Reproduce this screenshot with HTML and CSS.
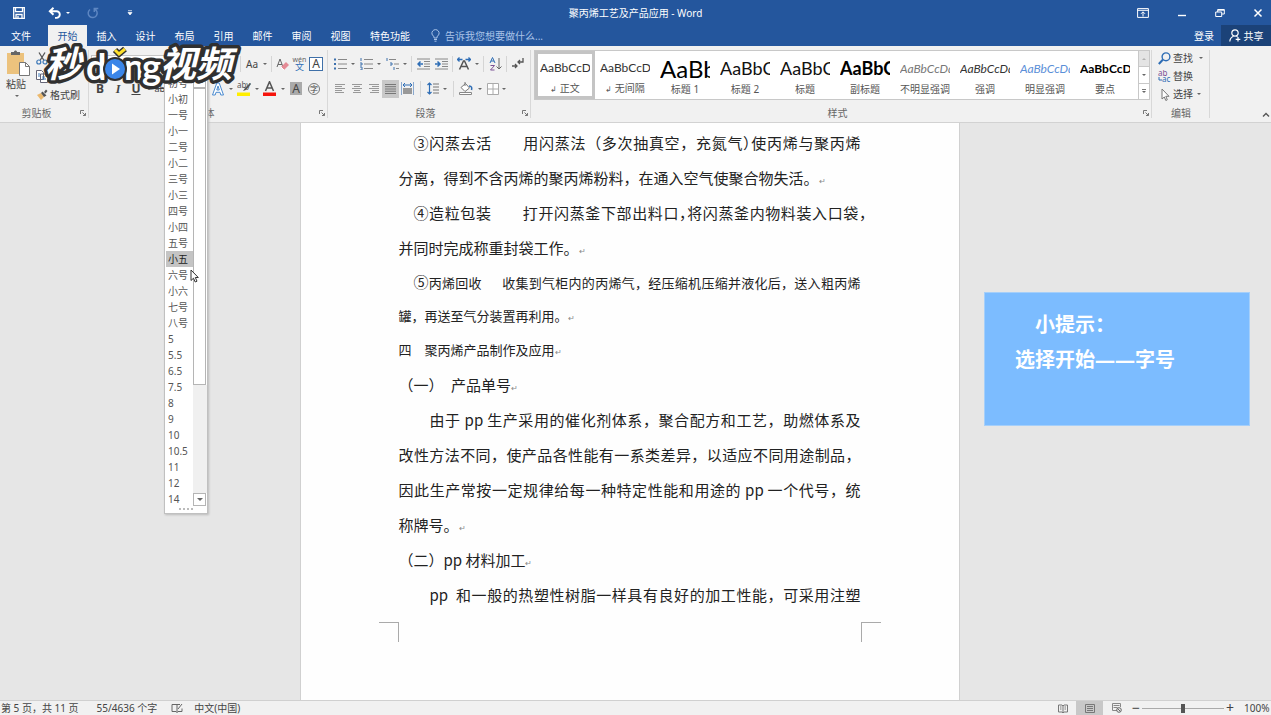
FILE: index.html
```html
<!DOCTYPE html>
<html lang="zh-CN">
<head>
<meta charset="utf-8">
<title>聚丙烯工艺及产品应用 - Word</title>
<link rel="stylesheet" href="styles.css">
</head>
<body>
<div class="app">
<header class="titlebar">
  <div class="quick">
    <button aria-label="保存"><svg width="12" height="12" viewBox="0 0 12 12"><path d="M.7.7h10.6v10.6H.7zM2.5.7v4h7v-4M3 11.3V7.5h6v3.8M5 9v2" fill="none" stroke="#fff" stroke-width="1.3"/></svg></button>
    <button class="undo" aria-label="撤消"><svg width="14" height="12" viewBox="0 0 14 12"><path d="M5.5.8 1.8 4.3l3.7 3.5M2 4.3h6.5a3.3 3.3 0 0 1 0 6.6H7" fill="none" stroke="#fff" stroke-width="1.9"/></svg><i class="caret light"></i></button>
    <button class="redo" aria-label="重复"><svg width="12" height="12" viewBox="0 0 12 12"><path d="M7.5 2A4.5 4.5 0 1 1 3 2.5M7.3 5V1.5h4" fill="none" stroke="#5d86c2" stroke-width="1.5"/></svg></button>
    <button class="more" aria-label="自定义快速访问工具栏"><svg width="6" height="6" viewBox="0 0 6 6"><path d="M1 .7h4M1 2.5h4L3 5z" fill="#fff" stroke="#fff" stroke-width=".7"/></svg></button>
  </div>
  <h1>聚丙烯工艺及产品应用 - Word</h1>
  <div class="window">
    <button aria-label="功能区显示选项"><svg width="12" height="10" viewBox="0 0 12 10"><path d="M.6.6h10.8v8.8H.6zM.6 2.3h10.8M6 8.5V4M4 5.8l2-2 2 2" fill="none" stroke="#fff"/></svg></button>
    <button aria-label="最小化"><svg width="10" height="10" viewBox="0 0 10 10"><path d="M1 7.5h8" stroke="#fff" stroke-width="1.4"/></svg></button>
    <button aria-label="还原"><svg width="10" height="10" viewBox="0 0 10 10"><path d="M.7 4h6v4.5h-6zM2.7 4V1.5h6.6V6H6.7M2.7 2.2h6.6" fill="none" stroke="#fff"/></svg></button>
    <button aria-label="关闭"><svg width="10" height="10" viewBox="0 0 10 10"><path d="m1.5 1.5 7 7m0-7-7 7" stroke="#fff" stroke-width="1.5"/></svg></button>
  </div>
</header>
<nav class="tabs">
  <button>文件</button><button class="active">开始</button><button>插入</button><button>设计</button><button>布局</button><button>引用</button><button>邮件</button><button>审阅</button><button>视图</button><button class="wide">特色功能</button>
  <button class="tell"><svg width="9" height="13" viewBox="0 0 9 13"><path d="M3 9V7.5a3.6 3.6 0 1 1 3 0V9zM3 10.5h3M3.5 12.2h2" fill="none" stroke="#a9c3e8"/></svg>告诉我您想要做什么...</button>
  <button class="login">登录</button>
  <button class="share"><svg width="12" height="13" viewBox="0 0 12 13"><circle cx="6" cy="4" r="3.2" fill="none" stroke="#fff" stroke-width="1.2"/><path d="M.8 12.5C1 9.5 2.500 8 4.500 7.200M7.500 7l1 .8M9 8v4.500M6.700 10.300h4.600" fill="none" stroke="#fff" stroke-width="1.2"/></svg>共享</button>
</nav>
<section class="ribbon">
  <div class="group clipboard">
    <div class="body clip">
      <button class="paste"><svg width="25" height="27" viewBox="0 0 25 27"><path d="M1 3h17v21H1z" fill="#ecc27d"/><path d="M5 5V2h3c0-2 3-2 3 0h3v3z" fill="#666"/><path d="M13.500 12.500h6l4 4v9h-10z" fill="#fff" stroke="#777"/><path d="M19.500 12.500v4h4" fill="none" stroke="#777"/></svg><span>粘贴</span><i class="caret"></i></button>
      <div class="cliplist">
        <button aria-label="剪切"><svg width="12" height="13" viewBox="0 0 12 13"><path d="m3 .5 5 8M9 .5l-5 8" stroke="#555" stroke-width="1.300"/><circle cx="2.800" cy="10" r="2" fill="none" stroke="#3c78b8" stroke-width="1.200"/><circle cx="9" cy="10" r="2" fill="none" stroke="#3c78b8" stroke-width="1.200"/></svg></button>
        <button aria-label="复制"><svg width="12" height="13" viewBox="0 0 12 13"><path d="M.5.500h5l2 2v7h-7zM4.500 4h5l2 2v6.500h-7z" fill="#fff" stroke="#667"/><path d="M2 4h2M2 6h2M6 7h3M6 9h4" stroke="#3c78b8"/></svg></button>
        <button><svg width="12" height="12" viewBox="0 0 12 12"><path d="m1 6 4-2 3 4-3 3z" fill="#ecb96d"/><path d="m5 4 1.500-1.500 4 4L8 8zM8 3l2-2.500 1.500 1.500-2 2.500z" fill="#555"/></svg>格式刷</button>
      </div>
    </div>
    <footer><span>剪贴板</span><button class="launch" aria-label="剪贴板选项"><svg width="6" height="6" viewBox="0 0 6 6"><path d="M.5 4V.500H4M2.500 2.500l3 3M5.500 3v2.500H3" fill="none" stroke="#777"/></svg></button></footer>
  </div>
  <div class="group font">
    <div class="body rows">
      <div class="row">
        <select class="fontname" aria-label="字体"><option></option></select><select class="fontsize" aria-label="字号"><option></option></select>
        <i class="sep first"></i><button>Aa</button><i class="caret"></i><i class="sep"></i>
        <button aria-label="清除格式"><svg width="14" height="14" viewBox="0 0 14 14"><path d="m1 10 3-8 3 8M2 7.500h4" fill="none" stroke="#666"/><path d="m5 10 5-5 3 3-5 5z" fill="#e58b96"/><path d="m5 10 3 3" stroke="#fff"/></svg></button>
        <button class="ruby" aria-label="拼音指南"><small>wén</small><b>文</b></button>
        <button class="boxed">A</button>
      </div>
      <div class="row">
        <button class="strong">B</button><button class="strong ital">I</button><button class="strong under">U</button><i class="caret"></i><button class="strike">abc</button>
        <button class="effect" aria-label="文本效果"><svg width="14" height="14" viewBox="0 0 14 14"><path d="M1.500 13 5.800 1h2.400l4.300 12H9.800l-.8-2.700H5L4.200 13zM5.800 8h2.500L7 4z" fill="#fff" stroke="#4b8bd0"/></svg></button><i class="caret"></i>
        <button aria-label="突出显示"><svg width="14" height="15" viewBox="0 0 14 15"><path d="M0 11.500h13V15H0z" fill="#ffee00"/><text x="0" y="7" class="t8">aby</text><path d="M13 2 8 7l-2 3 3-1 5-6z" fill="#555"/></svg></button><i class="caret"></i>
        <button aria-label="字体颜色"><svg width="14" height="15" viewBox="0 0 14 15"><path d="M0 11.500h13V15H0z" fill="#f6140c"/><path d="m2.500 10 4-9.300L10.500 10M4 7h5" fill="none" stroke="#555" stroke-width="1.500"/></svg></button><i class="caret"></i>
        <button class="shade"><span>A</span></button>
        <button class="circ"><span>字</span></button>
      </div>
    </div>
    <footer><span>字体</span><button class="launch" aria-label="字体选项"><svg width="6" height="6" viewBox="0 0 6 6"><path d="M.5 4V.500H4M2.500 2.500l3 3M5.500 3v2.500H3" fill="none" stroke="#777"/></svg></button></footer>
  </div>
  <div class="group para">
    <div class="body rows">
      <div class="row">
        <button aria-label="项目符号"><svg width="13" height="12" viewBox="0 0 13 12"><path d="M0 1.500h2M0 6h2M0 10.500h2" stroke="#3c70ad" stroke-width="2"/><path d="M4 1.500h9M4 6h9M4 10.500h9" stroke="#888"/></svg></button><i class="caret"></i>
        <button aria-label="编号"><svg width="13" height="12" viewBox="0 0 13 12"><path d="M1 0v3M0 5h2v2H0M0 9h2v3H0" fill="none" stroke="#3c70ad"/><path d="M4 1.500h9M4 6h9M4 10.500h9" stroke="#888"/></svg></button><i class="caret"></i>
        <button aria-label="多级列表"><svg width="13" height="12" viewBox="0 0 13 12"><path d="M1 0v3M4 5h2v2H4M8 9v3" fill="none" stroke="#3c70ad"/><path d="M3 1.500h7M8 6h5M10 10.500h3" stroke="#888"/></svg></button><i class="caret"></i><i class="sep"></i>
        <button aria-label="减少缩进"><svg width="13" height="12" viewBox="0 0 13 12"><path d="M0 1h13M7 3.500h6M7 6h6M7 8.500h6M0 11h13" stroke="#888"/><path d="M6 6H1m2.500-2.500L1 6l2.500 2.500" fill="none" stroke="#2e6db5" stroke-width="1.500"/></svg></button>
        <button aria-label="增加缩进"><svg width="13" height="12" viewBox="0 0 13 12"><path d="M0 1h13M7 3.500h6M7 6h6M7 8.500h6M0 11h13" stroke="#888"/><path d="M0 6h5M2.500 3.500 5 6 2.500 8.500" fill="none" stroke="#2e6db5" stroke-width="1.500"/></svg></button><i class="sep"></i>
        <button aria-label="中文版式"><svg width="14" height="13" viewBox="0 0 14 13"><path d="M.500 2.500h5M8.500 2.500h5M2.500.500l-2 2 2 2M11.500.500l2 2-2 2" fill="none" stroke="#2e6db5" stroke-width="1.300"/><path d="M2.500 12.500 6.500 4h1l4 8.500M4 9.500h6" fill="none" stroke="#555" stroke-width="1.500"/></svg></button><i class="caret"></i><i class="sep"></i>
        <button aria-label="排序"><svg width="13" height="14" viewBox="0 0 13 14"><path d="M1 6 3.500.500 6 6M2 4h3" fill="none" stroke="#2e6db5"/><path d="M1.500 8.500h4l-4 4.500h4" fill="none" stroke="#7c5296"/><path d="M10 1v11M7.500 9.500 10 12l2.500-2.500" fill="none" stroke="#666"/></svg></button><i class="sep"></i>
        <button aria-label="显示编辑标记"><svg width="12" height="11" viewBox="0 0 12 11"><path d="M11 0v4H6M8 2 6 4l2 2M0 8h5M3 6l2 2-2 2" fill="none" stroke="#555" stroke-width="1.300"/></svg></button>
      </div>
      <div class="row tight">
        <button aria-label="左对齐"><svg width="10" height="9" viewBox="0 0 10 9"><path d="M0 .500h10M0 2.500h7M0 4.500h10M0 6.500h7M0 8.500h9" stroke="#999"/></svg></button>
        <button aria-label="居中"><svg width="10" height="9" viewBox="0 0 10 9"><path d="M0 .500h10M2 2.500h6M0 4.500h10M2 6.500h6M1 8.500h8" stroke="#999"/></svg></button>
        <button aria-label="右对齐"><svg width="10" height="9" viewBox="0 0 10 9"><path d="M0 .500h10M3 2.500h7M0 4.500h10M3 6.500h7M1 8.500h9" stroke="#999"/></svg></button>
        <button class="on" aria-label="两端对齐"><svg width="11" height="10" viewBox="0 0 11 10"><path d="M0 .500h11M0 2.700h11M0 5h11M0 7.200h11M0 9.500h11" stroke="#777"/></svg></button>
        <button aria-label="分散对齐"><svg width="13" height="13" viewBox="0 0 13 13"><path d="M2 6h9v6H2z" fill="#999"/><path d="M.5 0v13M12.500 0v13" stroke="#8aa9cf"/><path d="M2 3h9M4 1 2 3l2 2M9 1l2 2-2 2" fill="none" stroke="#2e6db5"/></svg></button><i class="sep big"></i>
        <button aria-label="行距"><svg width="12" height="13" viewBox="0 0 12 13"><path d="M2.500 1v11M.500 3l2-2 2 2M.500 10l2 2 2-2" fill="none" stroke="#2e6db5" stroke-width="1.200"/><path d="M6 2h6M6 5h6M6 8h6M6 11h6" stroke="#777"/></svg></button><i class="caret"></i><i class="sep big"></i>
        <button aria-label="底纹"><svg width="14" height="13" viewBox="0 0 14 13"><path d="m2 5.500 4.500-4 4 4.500L6 9.500zM6 4V0" fill="#fff" stroke="#777"/><path d="M10 4c3 0 3 2 2.500 4" fill="none" stroke="#2e6db5" stroke-width="1.500"/><path d="M.5 10.500h12v2H.500z" fill="#fff" stroke="#888"/></svg></button><i class="caret far"></i>
        <button class="border" aria-label="边框"><svg width="12" height="12" viewBox="0 0 12 12"><path d="M.5.500h11v11H.500zM6 .500v11M.500 6h11" fill="#fff" stroke="#aaa"/></svg></button><i class="caret"></i>
      </div>
    </div>
    <footer><span>段落</span><button class="launch" aria-label="段落选项"><svg width="6" height="6" viewBox="0 0 6 6"><path d="M.5 4V.500H4M2.500 2.500l3 3M5.500 3v2.500H3" fill="none" stroke="#777"/></svg></button></footer>
  </div>
  <div class="group styles">
    <div class="body gal">
      <div class="gallery">
        <button class="chosen"><span class="sample">AaBbCcDd</span><span class="name"><em>↲</em> 正文</span></button>
        <button><span class="sample">AaBbCcDd</span><span class="name"><em>↲</em> 无间隔</span></button>
        <button><span class="sample h1">AaBb</span><span class="name">标题 1</span></button>
        <button><span class="sample h2">AaBbC</span><span class="name">标题 2</span></button>
        <button><span class="sample h2">AaBbC</span><span class="name">标题</span></button>
        <button><span class="sample h2 bold">AaBbC</span><span class="name">副标题</span></button>
        <button><span class="sample it grey">AaBbCcDd</span><span class="name">不明显强调</span></button>
        <button><span class="sample it">AaBbCcDd</span><span class="name">强调</span></button>
        <button><span class="sample it blue">AaBbCcDd</span><span class="name">明显强调</span></button>
        <button><span class="sample bold">AaBbCcD</span><span class="name">要点</span></button>
      </div>
      <div class="galscroll"><button aria-label="上一行"><i class="caret up"></i></button><button aria-label="下一行"><i class="caret"></i></button><button class="all" aria-label="其他"><i class="caret"></i></button></div>
    </div>
    <footer><span>样式</span><button class="launch" aria-label="样式选项"><svg width="6" height="6" viewBox="0 0 6 6"><path d="M.5 4V.500H4M2.500 2.500l3 3M5.500 3v2.500H3" fill="none" stroke="#777"/></svg></button></footer>
  </div>
  <div class="group edit">
    <div class="body edits">
      <button><svg width="13" height="13" viewBox="0 0 13 13"><circle cx="8" cy="4.800" r="3.900" fill="none" stroke="#2e6db5" stroke-width="1.400"/><path d="M5 7.500.800 12" stroke="#2e6db5" stroke-width="2"/></svg>查找<i class="caret far"></i></button>
      <button><svg width="13" height="13" viewBox="0 0 13 13"><text x="0" y="6" class="t8 violet">ab</text><text x="4" y="12" class="t8 navy">ac</text><path d="M1 7v3h3" fill="none" stroke="#2e6db5"/></svg>替换</button>
      <button><svg width="13" height="13" viewBox="0 0 13 13"><path d="M4 1v10l2.300-2 1.500 3.500 1.500-.7L7.800 8.300H11z" fill="#fff" stroke="#777"/></svg>选择<i class="caret"></i></button>
    </div>
    <footer><span>编辑</span></footer>
  </div>
  <button class="collapse" aria-label="折叠功能区"><svg width="8" height="6" viewBox="0 0 8 6"><path d="m1 4.500 3-3 3 3" fill="none" stroke="#555" stroke-width="1.400"/></svg></button>
</section>
<main class="workspace">
  <article class="page">
    <div class="text">
      <p class="full in1">③闪蒸去活　　用闪蒸法（多次抽真空，充氮气<span class="half">）</span>使丙烯与聚丙烯</p>
      <p>分离，得到不含丙烯的聚丙烯粉料，在通入空气使聚合物失活。<i class="ret">↵</i></p>
      <p class="full in1 hang">④造粒包装　　打开闪蒸釜下部出料口<span class="half">，</span>将闪蒸釜内物料装入口袋<span class="half">，</span></p>
      <p>并同时完成称重封袋工作。<i class="ret">↵</i></p>
      <p class="full in1 small"><span class="num">⑤</span>丙烯回收<span class="gap"></span>收集到气柜内的丙烯气，经压缩机压缩并液化后，送入粗丙烯</p>
      <p class="small">罐，再送至气分装置再利用。<i class="ret">↵</i></p>
      <p class="small">四　聚丙烯产品制作及应用<i class="ret">↵</i></p>
      <p>（一）　产品单号<i class="ret">↵</i></p>
      <p class="full in2">由于 pp 生产采用的催化剂体系，聚合配方和工艺，助燃体系及</p>
      <p class="full">改性方法不同，使产品各性能有一系类差异，以适应不同用途制品，</p>
      <p class="full">因此生产常按一定规律给每一种特定性能和用途的 pp 一个代号，统</p>
      <p>称牌号。<i class="ret">↵</i></p>
      <p>（二）pp 材料加工<i class="ret">↵</i></p>
      <p class="full in2">pp&nbsp; 和一般的热塑性树脂一样具有良好的加工性能，可采用注塑</p>
    </div>
    <div class="marks"><i></i><i></i></div>
  </article>
  <aside class="tip"><p class="lead">小提示：</p><p>选择开始——字号</p></aside>
</main>
<footer class="status">
  <span>第 5 页，共 11 页</span><span class="words">55/4636 个字</span>
  <svg width="12" height="10" viewBox="0 0 12 10"><path d="M6 1.500v8M6 1.500H1v7h4l1 1 1-1h4v-3M6 1.500h3M7 6l4-5" fill="none" stroke="#666"/></svg>
  <span class="lang">中文(中国)</span>
  <div class="views">
    <button aria-label="阅读视图"><svg width="10" height="9" viewBox="0 0 10 9"><path d="M.5 1H4l1 1 1-1h3.500v7H6L5 9 4 8H.500zM5 2v6M2 3h1.500M2 5h1.500M6.500 3H8M6.500 5H8" fill="none" stroke="#777"/></svg></button>
    <button class="on" aria-label="页面视图"><svg width="10" height="9" viewBox="0 0 10 9"><path d="M.5.500h9v8h-9zM2 2.500h6M2 4.500h6M2 6.500h6" fill="none" stroke="#777"/></svg></button>
    <button aria-label="Web 版式视图"><svg width="10" height="10" viewBox="0 0 10 10"><path d="M5 7.500H.500v-7h8V4M1.500 2.500h6M1.500 4.500h4" fill="none" stroke="#888"/><circle cx="7" cy="7" r="2.300" fill="#eee" stroke="#666"/><path d="m5.500 5.500 3 3" stroke="#666"/></svg></button>
  </div>
  <button class="zoomb" aria-label="缩小">−</button><input type="range" aria-label="显示比例" min="0" max="100" value="50"><button class="zoomb" aria-label="放大">+</button><span class="pct">100%</span>
</footer>
<div class="dropdown">
  <ul role="listbox" aria-label="字号列表">
    <li role="option">初号</li><li role="option">小初</li><li role="option">一号</li><li role="option">小一</li><li role="option">二号</li><li role="option">小二</li><li role="option">三号</li><li role="option">小三</li><li role="option">四号</li><li role="option">小四</li><li role="option">五号</li><li role="option" aria-selected="true" class="sel">小五</li><li role="option">六号</li><li role="option">小六</li><li role="option">七号</li><li role="option">八号</li><li role="option">5</li><li role="option">5.5</li><li role="option">6.5</li><li role="option">7.5</li><li role="option">8</li><li role="option">9</li><li role="option">10</li><li role="option">10.5</li><li role="option">11</li><li role="option">12</li><li role="option">14</li>
  </ul>
  <div class="scroll"><button aria-label="向上滚动"><i class="caret up"></i></button><div class="thumb"></div><div class="track"></div><button aria-label="向下滚动"><i class="caret"></i></button></div>
  <div class="grip"><i></i><i></i><i></i><i></i></div>
</div>
<svg class="cursor" width="9" height="14" viewBox="0 0 9 14"><path d="M1 1v10.500l2.500-2.300L5.200 13l1.800-.8-1.700-3.700H8.300z" fill="#fff" stroke="#333"/></svg>
<svg class="brand" width="196" height="50" viewBox="0 0 196 50">
  <g class="brandtext">
    <text x="1" y="34" class="cjk">秒</text><text x="42" y="37" class="lat">d</text><text x="80" y="37" class="lat">n</text><text x="98" y="37" class="lat">g</text><text x="116" y="34" class="cjk">视频</text>
  </g>
  <circle cx="71" cy="26" r="12" fill="#303030"/><circle cx="71" cy="26" r="10" fill="#3b86e8"/><path d="M68 20.500v11l8-5.500z" fill="#fff"/><path d="m71 7 4 4 6-5" fill="none" stroke="#303030" stroke-width="6"/><path d="m71 7 4 4 6-5" fill="none" stroke="#ffe02b" stroke-width="3"/>
</svg>
</div>
</body>
</html>
```
FILE: styles.css
```css
* { box-sizing: border-box; }
body { margin: 0; font-family: "Noto Sans", "Noto Sans CJK SC", sans-serif; font-size: 10px; line-height: 14px; color: #444; }
button, select, input { font: inherit; color: inherit; background: none; border: 0; padding: 0; margin: 0; }
button { display: inline-flex; align-items: center; justify-content: center; white-space: nowrap; }
svg { flex: none; display: block; }
p, ul, h1 { margin: 0; padding: 0; }
.app { position: relative; display: flex; flex-direction: column; height: 100vh; overflow: hidden; background: #e6e6e6; }

.caret { flex: none; width: 8px; display: flex; justify-content: center; }
.caret::after { content: ""; border: 2px solid transparent; border-top-color: #666; border-bottom: 0; }
.caret.light::after { border-top-color: #fff; }
.caret.up::after { border: 2px solid transparent; border-bottom-color: #666; border-top: 0; }
.caret.far { width: 12px; }
.sep { flex: none; width: 5px; height: 16px; background: linear-gradient(#d5d5d5, #d5d5d5) center / 1px 100% no-repeat; }
.sep.big { width: 8px; }

.titlebar { flex: none; display: grid; grid-template-columns: 1fr auto 1fr; align-items: center; height: 25px; background: #24569d; color: #fff; }
.titlebar h1 { font-size: 10px; font-weight: 400; line-height: 14px; }
.quick { display: flex; align-items: center; padding-left: 13px; }
.undo { margin-left: 23px; gap: 2px; }
.redo { margin-left: 15px; }
.more { margin-left: 28px; }
.window { display: flex; justify-content: flex-end; gap: 28px; padding-right: 8px; }

.tabs { flex: none; display: flex; height: 21px; background: #24569d; color: #fff; }
.tabs button { width: 39px; }
.tabs button:first-child { width: 42px; margin-right: 6px; }
.tabs .active { background: #f1f1f1; color: #24569d; width: 39px; }
.tabs .wide { width: 60px; }
.tabs .tell { width: auto; margin-left: 11px; gap: 5px; color: #a9c3e8; }
.tabs .login { margin-left: auto; width: 34px; }
.tabs .share { width: 50px; gap: 3px; background: #1b4278; }

.ribbon { flex: none; display: flex; height: 77px; background: #f1f1f1; border-bottom: 1px solid #d2d2d2; }
.group { flex: none; display: flex; flex-direction: column; padding: 3px 2px 0 2px; background: linear-gradient(#d8d8d8, #d8d8d8) right 4px / 1px 68px no-repeat; }
.body { height: 55px; }
.group footer { display: flex; align-items: center; height: 18px; color: #666; }
.group footer span { flex: 1; text-align: center; }
.launch { width: 8px; }
.clipboard { width: 89px; }
.clipboard footer span { padding-right: 8px; }
.font { width: 239px; }
.para { width: 203px; }
.styles { flex: 1 1 0; min-width: 0; padding-right: 2px; }
.edit { width: 58px; }
.collapse { flex: none; width: 61px; align-items: flex-end; justify-content: flex-end; padding: 0 1px 4px 0; }

.clip { display: flex; gap: 5px; padding-left: 3px; }
.paste { flex-direction: column; justify-content: flex-start; width: 26px; }
.paste span { margin: 0 4px 4px 0; }
.paste .caret { margin-right: 2px; }
.paste svg { margin-top: 1px; }
.cliplist { display: flex; flex-direction: column; justify-content: space-between; }
.cliplist button { justify-content: flex-start; gap: 2px; height: 18px; }

.rows { display: flex; flex-direction: column; padding-top: 2px; }
.row { display: flex; align-items: center; height: 25px; }
.row button { flex: none; width: 18px; height: 18px; }
.row.tight button { width: 17px; }
.row button.on { background: #c8c8c8; }
.row.tight .border { width: 14px; }
.para .row { padding-left: 1px; }
.fontname, .fontsize { border: 1px solid #c6c6c6; background: #fff; height: 17px; appearance: none; padding-left: 3px; }
.fontname { width: 74px; }
.fontsize { width: 42px; }
.sep.first { margin-left: 31px; }
.row .ruby { width: 15px; flex-direction: column; line-height: 8px; color: #666; }
.ruby small { font-size: 7px; line-height: 5px; }
.ruby b { font-size: 9px; font-weight: 400; line-height: 9px; color: #2e6db5; }
.row .boxed { width: 14px; height: 14px; border: 1px solid #3f70a8; background: #fff; margin-left: 2px; font-size: 12px; }
.row .strong { font-weight: 700; font-size: 12px; }
.row .ital { font-style: italic; font-family: "Liberation Serif", serif; }
.under { text-decoration: underline; }
.row .strike { text-decoration: line-through; font-size: 9px; }
.row .effect { margin-left: 38px; }
.shade span { width: 12px; background: #aaa; font-size: 12px; line-height: 13px; }
.circ span { width: 12px; height: 12px; border: 1px solid #777; border-radius: 50%; font-size: 8px; line-height: 10px; }
.t8 { font-size: 8px; fill: #555; }
.violet { fill: #7c5296; }
.navy { fill: #2e6db5; }

.gal { display: flex; padding: 1px 0 0 1px; }
.gallery { flex: 1; min-width: 0; height: 50px; display: flex; overflow: hidden; background: #fff; border: 1px solid #c8c8c8; }
.gallery button { flex: none; width: 60px; height: 48px; padding: 3px 5px; display: block; text-align: left; overflow: hidden; }
.gallery .chosen { box-shadow: inset 0 0 0 3px #c4c4c4; }
.sample { display: block; height: 27px; line-height: 27px; font-family: Lato, sans-serif; font-size: 12px; color: #333; overflow: hidden; }
.sample.h1 { font-size: 24px; color: #000; }
.sample.h2 { font-size: 18px; color: #111; }
.sample.bold { font-weight: 700; color: #000; }
.sample.it { font-style: italic; }
.sample.grey { color: #777; }
.sample.blue { color: #5b8fd8; }
.name { display: block; text-align: center; color: #555; line-height: 14px; }
.name em { font-style: normal; font-size: 8px; }
.galscroll { width: 11px; height: 50px; display: flex; flex-direction: column; border: 1px solid #c8c8c8; border-left: 0; background: #fff; }
.galscroll button { flex: 1; width: 10px; }
.galscroll button + button { border-top: 1px solid #c8c8c8; }
.galscroll button:first-child { background: #e4e4e4; }
.galscroll .up { opacity: .4; }
.galscroll .all .caret { border-top: 1px solid #777; width: 4px; padding-top: 1px; }
.edits { display: flex; flex-direction: column; padding-left: 4px; }
.edits button { justify-content: flex-start; height: 18px; gap: 2px; }

.workspace { position: relative; flex: 1; min-height: 0; display: flex; justify-content: center; padding-right: 12px; }
.page { width: 660px; padding: 2px 78px 0; background: #fefefe; border: 1px solid #d0d0d0; border-width: 0 1px; color: #222; }
.text { padding: 0 20px; font-family: "Noto Sans CJK SC", sans-serif; font-size: 15px; line-height: 35px; }
.text p { height: 35px; white-space: nowrap; }
.text .full { text-align: justify; text-align-last: justify; white-space: normal; }
.text .in1 { padding-left: 15px; }
.text .in2 { padding-left: 31px; }
.text .hang { margin-right: -6px; }
.text .small { font-size: 13px; line-height: 34px; height: 34px; }
.half { font-feature-settings: "halt"; }
.num { font-size: 15px; }
.gap { display: inline-block; width: 20px; }
.ret { font-size: 8px; font-style: normal; color: #888; }
.marks { display: flex; justify-content: space-between; padding-top: 10px; }
.marks i { width: 20px; height: 20px; border-top: 1px solid #aaa; border-right: 1px solid #aaa; }
.marks i:last-child { border-right: 0; border-left: 1px solid #aaa; }
.tip { position: absolute; top: 169px; right: 21px; width: 266px; height: 134px; padding: 14px 30px; background: #7cbcff; border: 1px solid #a5cffa; color: #fff; font-size: 20px; font-weight: 700; line-height: 35px; white-space: nowrap; }
.tip .lead { padding-left: 20px; }

.status { flex: none; display: flex; align-items: center; height: 15px; padding-left: 1px; background: #f1f1f1; border-top: 1px solid #d0d0d0; white-space: nowrap; }
.words { margin: 0 14px 0 18px; }
.lang { margin-left: 11px; }
.views { display: flex; margin-left: auto; }
.views button { width: 27px; height: 14px; }
.views .on { background: #c8c8c8; }
.zoomb { width: 12px; font-size: 14px; line-height: 12px; }
.status input { appearance: none; width: 82px; height: 12px; background: linear-gradient(#aaa, #aaa) center / 100% 1px no-repeat; }
.status input::-webkit-slider-thumb { appearance: none; width: 4px; height: 9px; background: #555; }
.pct { width: 35px; padding-left: 8px; }

.dropdown { position: absolute; left: 164px; top: 74px; width: 44px; display: grid; grid-template-columns: 1fr 14px; background: #fff; border: 1px solid #c0c0c0; box-shadow: 1px 1px 2px #bbb; }
.dropdown ul { list-style: none; padding-left: 1px; }
.dropdown li { height: 16px; line-height: 16px; padding-left: 2px; color: #555; white-space: nowrap; }
.dropdown .sel { background: #c4c4c4; color: #222; }
.scroll { display: flex; flex-direction: column; padding-bottom: 1px; }
.scroll button { height: 13px; width: 13px; border: 1px solid #b5b5b5; background: #fff; }
.scroll .caret::after { border-width: 3px; border-bottom-width: 0; }
.scroll .up::after { border-width: 0 3px 3px; }
.thumb { flex: 296; width: 13px; border: 1px solid #b5b5b5; background: #fff; }
.track { flex: 109; background: #f0f0f0; }
.grip { grid-column: 1 / -1; display: flex; justify-content: center; gap: 2px; height: 6px; padding-top: 1px; }
.grip i { width: 2px; height: 2px; background: #bbb; }
.cursor { position: absolute; left: 190px; top: 269px; }
.brand { position: absolute; left: 44px; top: 43px; overflow: visible; }
.brandtext text { font-style: italic; font-weight: 700; fill: #fff; stroke: #303030; stroke-width: 7px; stroke-linejoin: round; paint-order: stroke; }
.brandtext .cjk { font-family: "Noto Sans CJK SC", sans-serif; font-size: 36px; }
.brandtext .lat { font-family: Lato, sans-serif; font-size: 36px; font-style: normal; }
```
